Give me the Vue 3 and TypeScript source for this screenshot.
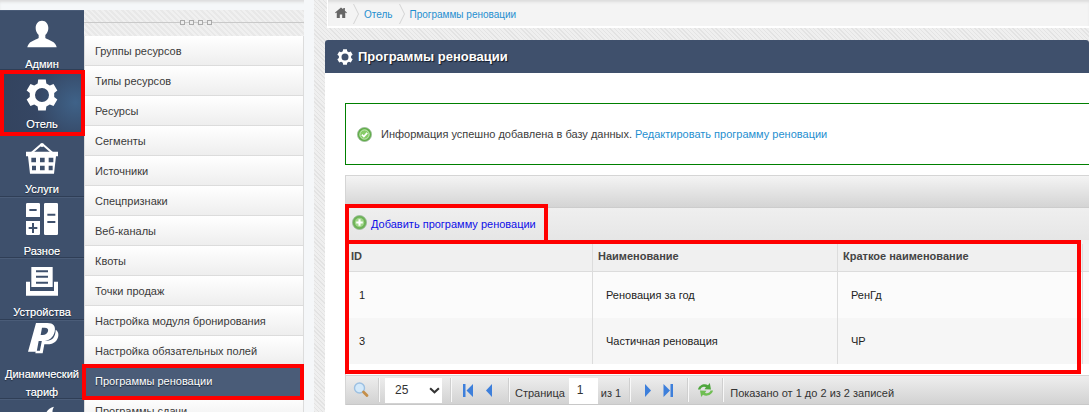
<template>
  <div class="page">
    <aside class="rail">
      <a
        v-for="item in railItems"
        :key="item.label"
        class="rail-item"
        :class="{ current: item.current }"
        :style="{ height: item.height + 'px' }"
      >
        <svg
          class="rail-icon"
          viewBox="0 0 48 48"
          :style="{ transform: `translateY(${item.shift}px)` }"
          v-html="item.icon"
        ></svg>
        <span class="rail-label">{{ item.label }}</span>
      </a>
    </aside>

    <nav class="submenu">
      <div class="submenu-head">
        <span class="grip"><i></i><i></i><i></i><i></i></span>
      </div>
      <a
        v-for="link in subLinks"
        :key="link"
        class="sub-link"
        :class="{ active: link === activeLink }"
      >{{ link }}</a>
    </nav>

    <main class="main">
      <div class="crumbs">
        <svg class="home" viewBox="0 0 14 13"><path d="M7 .5 0 6.600l.7.9L2 6.400V13h3.600V8.800h2.800V13H12V6.400l1.300 1.100.7-.9-2.400-2.100V1.200H9.700v1.600z" fill="#666"/></svg>
        <svg class="chev" viewBox="0 0 6 20"><path d="M.5 0 5.500 10 .5 20" fill="none" stroke="#d4d4d4"/></svg>
        <a>Отель</a>
        <svg class="chev" viewBox="0 0 6 20"><path d="M.5 0 5.500 10 .5 20" fill="none" stroke="#d4d4d4"/></svg>
        <a>Программы реновации</a>
      </div>

      <section class="panel">
        <h1 class="panel-title">
          <svg viewBox="0 0 48 48" width="16" height="16"><path :d="gearPath" fill="#fff" fill-rule="evenodd"/></svg>
          Программы реновации
        </h1>
        <div class="panel-body">
          <div class="notice">
            <svg viewBox="0 0 16 16" width="15" height="15">
              <circle cx="8" cy="8" r="7.500" fill="#5fae45" stroke="#9ab79a" stroke-width=".8"/>
              <circle cx="8" cy="8" r="5" fill="#86cc66" stroke="#e6f5df" stroke-width=".8"/>
              <path d="M5.200 8.100l2.100 2.100 3.600-4" fill="none" stroke="#fff" stroke-width="1.800"/>
            </svg>
            <span>Информация успешно добавлена в базу данных.</span>
            <a>Редактировать программу реновации</a>
          </div>

          <div class="grid">
            <div class="grid-caption"></div>
            <div class="grid-tools">
              <svg viewBox="0 0 16 16" width="15" height="15">
                <circle cx="8" cy="8" r="7.500" fill="#6db356" stroke="#9ab79a" stroke-width=".8"/>
                <circle cx="8" cy="8" r="5" fill="#a0d68a"/>
                <path d="M8 4.500v7M4.500 8h7" stroke="#fff" stroke-width="2.200"/>
              </svg>
              <a>Добавить программу реновации</a>
            </div>
            <div class="grid-row grid-head">
              <div v-for="col in columns" :key="col" class="cell">{{ col }}</div>
              <div class="cell"></div>
            </div>
            <div
              v-for="(row, i) in rows"
              :key="row.id"
              class="grid-row grid-data"
              :class="{ odd: i % 2 === 1 }"
            >
              <div class="cell">{{ row.id }}</div>
              <div class="cell">{{ row.name }}</div>
              <div class="cell">{{ row.short }}</div>
              <div class="cell"></div>
            </div>
            <div class="grid-gap"></div>
            <div class="pager">
              <svg viewBox="0 0 16 16" width="16" height="16">
                <circle cx="6.500" cy="6" r="5" fill="#d3e9fa" stroke="#9cc0e2" stroke-width="1.400"/>
                <path d="M10.500 10l3.500 3.600" stroke="#c58f4a" stroke-width="2.800" stroke-linecap="round"/>
              </svg>
              <span class="sep s1"></span>
              <div class="pg-select">25
                <svg viewBox="0 0 10 6" width="11" height="7"><path d="M1 1l4 3.600L9 1" fill="none" stroke="#333" stroke-width="1.900"/></svg>
              </div>
              <span class="sep s2"></span>
              <svg class="first" viewBox="0 0 12 13" width="12" height="13"><path d="M1 0h2.500v13H1zM11 0v13L4.500 6.500z" fill="#3d7fdb"/></svg>
              <svg class="prev" viewBox="0 0 12 13" width="12" height="13"><path d="M9 0v13L3 6.500z" fill="#3d7fdb"/></svg>
              <span class="sep s3"></span>
              <span class="pg-text label-page">Страница</span>
              <span class="pg-input">1</span>
              <span class="pg-text label-of">из 1</span>
              <span class="sep s4"></span>
              <svg class="next" viewBox="0 0 12 13" width="12" height="13"><path d="M3 0v13l6-6.500z" fill="#3d7fdb"/></svg>
              <svg class="last" viewBox="0 0 12 13" width="12" height="13"><path d="M1.500 0v13L8 6.500zM8.500 0H11v13H8.500z" fill="#3d7fdb"/></svg>
              <span class="sep s5"></span>
              <svg class="refresh" viewBox="0 0 17 16" width="17" height="16">
                <path d="M1 7.500C2 3 7.500 1 11 3.200L12.800 1l1.200 6.500-6.500-.2 1.500-2C7 4 4 5 3.500 7.500z" fill="#4ea63c"/>
                <path d="M16 8.500c-1 4.500-6.500 6.500-10 4.300L4.200 15 3 8.500l6.500.2-1.500 2c2 1.300 5 .3 5.500-2.200z" fill="#6fbe52"/>
              </svg>
              <span class="sep s6"></span>
              <span class="pg-text label-total">Показано от 1 до 2 из 2 записей</span>
            </div>
          </div>
        </div>
      </section>
    </main>

    <div class="mark mark-rail"></div>
    <div class="mark mark-sub"></div>
    <div class="mark mark-add"></div>
    <div class="mark mark-table"></div>
  </div>
</template>

<script setup lang="ts">
// six-tooth gear, one tooth pointing up
function buildGear(): string {
  const pt = (r: number, a: number) =>
    `${(24 + r * Math.sin(a)).toFixed(1)} ${(24 - r * Math.cos(a)).toFixed(1)}`
  let d = ''
  for (let i = 0; i < 6; i++) {
    const a = (i * Math.PI) / 3
    d += `${i ? 'L' : 'M'}${pt(18.5, a - 0.36)}L${pt(24, a - 0.24)}L${pt(24, a + 0.24)}L${pt(18.5, a + 0.36)}`
  }
  return `${d}ZM24 13.500a10.500 10.500 0 1 0 0 21 10.500 10.500 0 0 0 0-21z`
}

const gearPath = buildGear()

const railItems = [
  {
    label: 'Админ',
    height: 60,
    shift: 0,
    icon: '<path fill="#fff" d="M24 1c-6 0-9.500 5-9.500 11 0 4 1.500 8 4.500 10.500V27c-2 2-11 4-14.500 8.500C3.500 37 2 39 2 41h44c0-2-1.500-4-2.500-5.500C40 31 31 29 29 27v-4.500c3-2.500 4.500-6.500 4.500-10.500C33.500 6 30 1 24 1z"/>',
  },
  {
    label: 'Отель',
    height: 65,
    shift: -1,
    current: true,
    icon: `<path fill="#fff" fill-rule="evenodd" d="${gearPath}"/>`,
  },
  {
    label: 'Услуги',
    height: 62,
    shift: -2,
    icon: '<path fill="none" stroke="#fff" stroke-width="3" d="M6 17 22 3h4l16 14"/><circle cx="24" cy="3" r="3" fill="#fff"/><path fill="#fff" fill-rule="evenodd" d="M0 13h48v7h-3l-3 26H6L3 20H0zM8 22v7h7v-7zM21 22v7h7v-7zM34 22v7h7v-7zM9 34v7h6v-7zM21 34v7h7v-7zM34 34v7h6v-7z"/>',
  },
  {
    label: 'Разное',
    height: 61,
    shift: -4,
    icon: '<path fill="#fff" fill-rule="evenodd" d="M2 0h17a2 2 0 0 1 2 2v19H0V2a2 2 0 0 1 2-2zM5 9v3h11V9zM29 0h17a2 2 0 0 1 2 2v44a2 2 0 0 1-2 2H29a2 2 0 0 1-2-2V2a2 2 0 0 1 2-2zM32 16v3h12v-3zM32 27v3h12v-3zM0 27h21v19a2 2 0 0 1-2 2H2a2 2 0 0 1-2-2zM9 30v6H4v3h5v6h3v-6h5v-3h-5v-6z"/>',
  },
  {
    label: 'Устройства',
    height: 62,
    shift: -1,
    icon: '<path fill="#fff" fill-rule="evenodd" d="M8 0h32v30H8zM15 5v3h18V5zM15 13v3h18v-3zM15 22v3h18v-3z"/><path fill="#fff" d="M0 22h6v14h36V22h6v21H0z"/>',
  },
  {
    label: 'Динамический тариф',
    height: 79,
    shift: -7,
    icon: '<path fill="#fff" fill-rule="evenodd" d="M15 0h17c9 0 13 5 11 13-2 9-9 14-18 14h-6l-3 16H3zM24 7l-2 11h3c4 0 7-2 8-5.500 1-3.500-1-5.500-5-5.500z"/><path fill="#fff" d="M44.500 10c4.500 3 5 8 3 13-2.500 6-8 9-15 9h-5l-2.500 13.500H14l.8-4h6l3-15h8c7 0 12.500-5 12.700-16.500z"/>',
  },
  {
    label: '',
    height: 40,
    shift: -3,
    icon: '<path fill="#fff" d="M42 1C34 3 29 9 29 16v12h18V15c-6 1-10-6-5-14z"/>',
  },
]

const subLinks = [
  'Группы ресурсов',
  'Типы ресурсов',
  'Ресурсы',
  'Сегменты',
  'Источники',
  'Спецпризнаки',
  'Веб-каналы',
  'Квоты',
  'Точки продаж',
  'Настройка модуля бронирования',
  'Настройка обязательных полей',
  'Программы реновации',
  'Программы сдачи',
]
const activeLink = 'Программы реновации'

const columns = ['ID', 'Наименование', 'Краткое наименование']
const rows = [
  { id: 1, name: 'Реновация за год', short: 'РенГд' },
  { id: 3, name: 'Частичная реновация', short: 'ЧР' },
]
</script>

<style>
html,
body {
  margin: 0;
  overflow: hidden;
}
</style>

<style scoped>
.page {
  position: relative;
  display: flex;
  width: 1089px;
  height: 412px;
  overflow: hidden;
  font-family: "Liberation Sans", Arial, sans-serif;
  font-size: 11px;
  color: #333;
  background: #f5f7f9;
  box-shadow: inset 0 3px 3px -1px #dcdcdc;
}

.rail {
  flex: none;
  width: 84px;
  height: 402px;
  margin-top: 10px;
  overflow: hidden;
  background: #3e506c;
}

.rail-item {
  display: flex;
  flex-direction: column;
  align-items: center;
  box-sizing: border-box;
  padding-top: 9px;
  border-bottom: 1px solid #2f3e56;
  border-top: 1px solid #4a5c78;
  color: #fff;
  text-align: center;
  text-shadow: 0 1px 1px #1d2838, 0 0 0.6px #fff;
}

.rail-item.current {
  background: radial-gradient(circle at 90% 50%, #3f6288 0, #354663 50%, #33435e 100%);
}

.rail-icon {
  flex: none;
  width: 32px;
  height: 32px;
  overflow: visible;
}

.rail-label {
  margin-top: 3px;
  line-height: 18px;
}

.submenu {
  flex: none;
  width: 220px;
  height: 402px;
  margin-top: 10px;
  overflow: hidden;
}

.submenu-head {
  position: relative;
  height: 26px;
  background: #ececec repeating-linear-gradient(45deg, #e8e8e8 0 2px, #f0f0f0 2px 4px);
}

.submenu-head::before {
  content: "";
  position: absolute;
  left: 0;
  right: 0;
  top: 12px;
  border-top: 1px solid #c9c9c9;
}

.grip {
  position: absolute;
  left: 96px;
  top: 10px;
  display: flex;
  gap: 4px;
}

.grip i {
  width: 3px;
  height: 3px;
  border: 1px solid #aaa;
  background: #eee;
}

.sub-link {
  display: block;
  box-sizing: border-box;
  height: 30px;
  padding-left: 10px;
  border: 1px solid #dcdcdc;
  border-top: 0;
  background: linear-gradient(#fff, #eeeeee);
  line-height: 30px;
  color: #3a3a3a;
}

.sub-link.active {
  border-color: #4a5c78;
  background: #4a5c78;
  color: #fff;
  text-shadow: 0 1px 1px #1d2838;
}

.main {
  flex: 1;
  min-width: 0;
  padding-left: 11px;
  border-left: 10px solid #f5f7f9;
  background: #e9e9e9 repeating-linear-gradient(45deg, #e3e3e3 0 1px, #efefef 1px 3px);
}

.crumbs {
  display: flex;
  align-items: center;
  box-sizing: border-box;
  height: 28px;
  margin: 0 0 12px 2px;
  padding: 2px 0 0 7px;
  background: #f4f4f4;
  border-left: 1px solid #fff;
  border-bottom: 2px solid #fff;
  box-shadow: inset 0 3px 3px -1px #dcdcdc;
  font-size: 10px;
}

.crumbs a {
  color: #1f8fd0;
}

.home {
  width: 12px;
  height: 11px;
  margin-bottom: 3px;
}

.chev {
  width: 6px;
  height: 20px;
  margin: 0 5px 0 6px;
}

.panel {
  width: 764px;
}

.panel-title {
  display: flex;
  align-items: center;
  gap: 5px;
  height: 33px;
  margin: 0;
  padding-left: 12px;
  border-radius: 3px 3px 0 0;
  background: #3f506c;
  color: #fff;
  font-size: 13px;
  font-weight: 700;
  text-shadow: 1px 1px 1px #111a28;
}

.panel-body {
  height: 340px;
  padding: 30px 0 0 20px;
  background: #fff;
  box-sizing: border-box;
}

.notice {
  display: flex;
  align-items: center;
  box-sizing: border-box;
  height: 62px;
  padding-left: 11px;
  border: 1px solid #008000;
  border-right: 0;
  color: #3c3c3c;
}

.notice svg {
  margin-right: 9px;
}

.notice a {
  margin-left: 3px;
  color: #1f8fd0;
}

.grid {
  margin-top: 10px;
  border: 1px solid #d5d5d5;
  border-right: 0;
  border-bottom: 0;
}

.grid-caption {
  height: 31px;
  border-bottom: 1px solid #ccc;
  background: linear-gradient(#f4f4f4, #d4d4d4);
}

.grid-tools {
  display: flex;
  align-items: center;
  gap: 4px;
  box-sizing: border-box;
  height: 32px;
  padding: 0 0 3px 6px;
  background: linear-gradient(#efefef, #e6e6e6);
}

.grid-tools a {
  padding-top: 2px;
  color: #0f0fe8;
}

.grid-row {
  display: grid;
  grid-template-columns: 247px 245px 245px 1fr;
}

.grid-head {
  box-sizing: border-box;
  height: 32px;
  background: #f0f0f0;
  border-top: 4px solid #efefef;
  border-bottom: 1px solid #dcdcdc;
  font-weight: 700;
  color: #444;
}

.grid-head .cell {
  padding-left: 5px;
  line-height: 24px;
}

.grid-data {
  height: 46px;
  background: #fbfbfb;
  color: #222;
}

.grid-data.odd {
  background: #f6f6f6;
}

.grid-data .cell {
  padding-left: 13px;
  line-height: 46px;
}

.cell {
  box-sizing: border-box;
  border-right: 1px solid #dcdcdc;
}

.cell:last-child {
  border-right: 0;
}

.grid-gap {
  height: 11px;
}

.pager {
  display: flex;
  align-items: center;
  box-sizing: border-box;
  height: 30px;
  padding-left: 7px;
  background: linear-gradient(#eeeeee, #d2d2d2);
  border-top: 1px solid #d5d5d5;
  border-bottom: 1px solid #c8c8c8;
}

.sep {
  flex: none;
  width: 1px;
  height: 24px;
  background: #f8f8f8;
  border-left: 1px solid #cfcfcf;
}

.s1 { margin-left: 9px; }
.s2 { margin-left: 8px; }
.s3 { margin-left: 13px; }
.s4 { margin-left: 8px; }
.s5 { margin-left: 13px; }
.s6 { margin-left: 8px; }

.first { margin-left: 10px; }
.prev { margin-left: 9px; }
.next { margin-left: 11px; }
.last { margin-left: 8px; }
.refresh { margin-left: 8px; }

.pg-select {
  display: flex;
  align-items: center;
  justify-content: space-between;
  box-sizing: border-box;
  width: 57px;
  height: 25px;
  margin-left: 5px;
  padding: 0 2px 0 10px;
  background: #fff;
  font-size: 12px;
}

.pg-text {
  padding-top: 5px;
  color: #333;
}

.label-page { margin-left: 5px; }
.label-of { margin-left: 3px; }
.label-total { margin-left: 6px; }

.pg-input {
  box-sizing: border-box;
  width: 29px;
  height: 26px;
  margin: 1px 0 0 4px;
  padding-left: 8px;
  background: #fff;
  line-height: 24px;
  font-size: 12px;
}

.mark {
  position: absolute;
  box-sizing: border-box;
  border: 4px solid #f00;
  pointer-events: none;
}

.mark-rail {
  left: 0;
  top: 70px;
  width: 85px;
  height: 66px;
}

.mark-sub {
  left: 82px;
  top: 364px;
  width: 222px;
  height: 36px;
}

.mark-add {
  left: 345px;
  top: 204px;
  width: 203px;
  height: 40px;
}

.mark-table {
  left: 345px;
  top: 240px;
  width: 736px;
  height: 134px;
}
</style>
